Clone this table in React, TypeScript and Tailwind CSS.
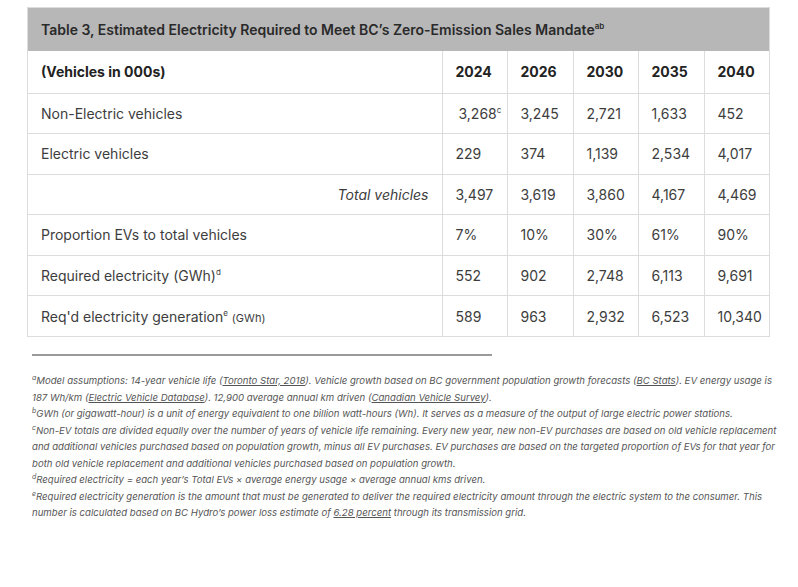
import React from 'react';

const years = ['2024', '2026', '2030', '2035', '2040'];

interface Row {
  label: React.ReactNode;
  values: React.ReactNode[];
  right?: boolean;
}

const rows: Row[] = [
  {
    label: 'Non-Electric vehicles',
    values: [
      <span className="pl-[3px]">
        3,268<sup className="text-[8px] -top-[6px]">c</sup>
      </span>,
      '3,245',
      '2,721',
      '1,633',
      '452',
    ],
  },
  { label: 'Electric vehicles', values: ['229', '374', '1,139', '2,534', '4,017'] },
  {
    label: <span className="italic">Total vehicles</span>,
    values: ['3,497', '3,619', '3,860', '4,167', '4,469'],
    right: true,
  },
  { label: 'Proportion EVs to total vehicles', values: ['7%', '10%', '30%', '61%', '90%'] },
  {
    label: (
      <>
        Required electricity (GWh)<sup className="text-[8px] -top-[6px]">d</sup>
      </>
    ),
    values: ['552', '902', '2,748', '6,113', '9,691'],
  },
  {
    label: (
      <>
        Req'd electricity generation<sup className="text-[8px] -top-[6px]">e</sup>{' '}
        <span className="text-[11px]">(GWh)</span>
      </>
    ),
    values: ['589', '963', '2,932', '6,523', '10,340'],
  },
];

const Note = ({ mark }: { mark: string }) => <sup className="text-[7px] leading-none -top-[4px]">{mark}</sup>;

export default function App() {
  return (
    <div className="w-[798px] h-[587px] bg-white text-[#3d3d3d] font-['Inter',sans-serif]">
      <div className="pl-[27px] pt-[7px] w-[770px]">
        {/* Table */}
        <div className="border border-[#dcdcdc]">
          <div className="h-[43px] bg-[#b7b7b7] flex items-center px-[13px] text-[14px] font-semibold text-[#2a2a2a]">
            Table 3, Estimated Electricity Required to Meet BC’s Zero-Emission Sales Mandate
            <sup className="text-[8px]">ab</sup>
          </div>
          <table className="w-full border-collapse text-[14px]">
            <colgroup>
              <col className="w-[414px]" />
              <col className="w-[65px]" />
              <col className="w-[66px]" />
              <col className="w-[65px]" />
              <col className="w-[66px]" />
              <col />
            </colgroup>
            <thead>
              <tr className="h-[42px] font-bold text-[#222]">
                <th className="text-left pl-[13px] font-bold">(Vehicles in 000s)</th>
                {years.map((y) => (
                  <th key={y} className="text-left pl-[13px] border-l border-[#dcdcdc] font-bold">
                    {y}
                  </th>
                ))}
              </tr>
            </thead>
            <tbody>
              {rows.map((r, i) => (
                <tr key={i} className="h-[40.5px] border-t border-[#dcdcdc]">
                  <td className={r.right ? 'text-right pr-[13px]' : 'text-left pl-[13px]'}>{r.label}</td>
                  {r.values.map((v, j) => (
                    <td key={j} className="pl-[13px] border-l border-[#dcdcdc]">
                      {v}
                    </td>
                  ))}
                </tr>
              ))}
            </tbody>
          </table>
        </div>

        {/* Footnotes */}
        <div className="mt-[17px] ml-[5px] w-[460px] h-[2px] bg-[#9a9a9a]" />
        <div className="mt-[17px] ml-[5px] w-[750px] text-[9.6px] leading-[16.5px] italic text-[#555] whitespace-nowrap">
          <p>
            <Note mark="a" />
            Model assumptions: 14-year vehicle life (<span className="underline">Toronto Star, 2018</span>). Vehicle
            growth based on BC government population growth forecasts (<span className="underline">BC Stats</span>). EV
            energy usage is
            <br />
            187 Wh/km (<span className="underline">Electric Vehicle Database</span>). 12,900 average annual km driven (
            <span className="underline">Canadian Vehicle Survey</span>).
          </p>
          <p>
            <Note mark="b" />
            GWh (or gigawatt-hour) is a unit of energy equivalent to one billion watt-hours (Wh). It serves as a
            measure of the output of large electric power stations.
          </p>
          <p>
            <Note mark="c" />
            Non-EV totals are divided equally over the number of years of vehicle life remaining. Every new year, new
            non-EV purchases are based on old vehicle replacement
            <br />
            and additional vehicles purchased based on population growth, minus all EV purchases. EV purchases are
            based on the targeted proportion of EVs for that year for
            <br />
            both old vehicle replacement and additional vehicles purchased based on population growth.
          </p>
          <p>
            <Note mark="d" />
            Required electricity = each year’s Total EVs × average energy usage × average annual kms driven.
          </p>
          <p>
            <Note mark="e" />
            Required electricity generation is the amount that must be generated to deliver the required electricity
            amount through the electric system to the consumer. This
            <br />
            number is calculated based on BC Hydro’s power loss estimate of{' '}
            <span className="underline">6.28 percent</span> through its transmission grid.
          </p>
        </div>
      </div>
    </div>
  );
}
